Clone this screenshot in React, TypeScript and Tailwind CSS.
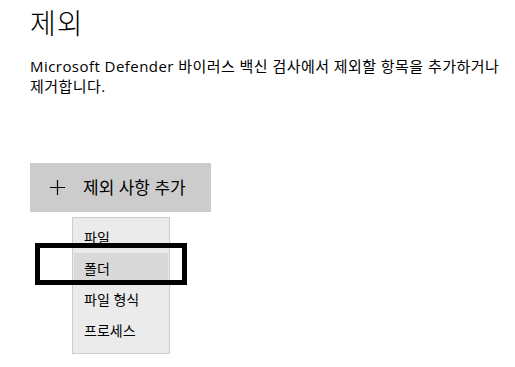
import React from 'react';

const menuItems = ['파일', '폴더', '파일 형식', '프로세스'];

export default function App() {
  return (
    <div className="relative w-[515px] h-[367px] overflow-hidden bg-white pl-[30px] text-black font-['Open_Sans','Noto_Sans_CJK_KR',sans-serif]">
      <h1 className="pt-[3px] text-[28px] leading-[40px] font-light tracking-[1px]">제외</h1>
      <p className="mt-[13px] text-[15px] leading-[20px] tracking-[0.45px] whitespace-nowrap">
        Microsoft Defender 바이러스 백신 검사에서 제외할 항목을 추가하거나
        <br />
        제거합니다.
      </p>

      <button className="mt-[67px] flex h-[49px] w-[181px] items-center bg-[#cccccc] pl-[20px] text-[17px]">
        <svg width="15" height="15" viewBox="0 0 15 15" className="shrink-0">
          <path d="M7.5 0v15M0 7.5h15" stroke="#000" strokeWidth="1.2" fill="none" />
        </svg>
        <span className="ml-[18px]">제외 사항 추가</span>
      </button>

      <div className="ml-[42px] mt-[5px] w-[98px] border border-[#cccccc] bg-[#ebebeb] px-[1px] pt-[4px] pb-[7px]">
        {menuItems.map((item, i) => (
          <div
            key={item}
            className={`flex h-[31px] items-center pl-[10px] text-[14px] ${i === 1 ? 'bg-[#d9d9d9]' : ''}`}
          >
            {item}
          </div>
        ))}
      </div>

      {/* annotation box */}
      <div className="absolute left-[35px] top-[243px] h-[42px] w-[152px] border-[5px] border-black" />
    </div>
  );
}
